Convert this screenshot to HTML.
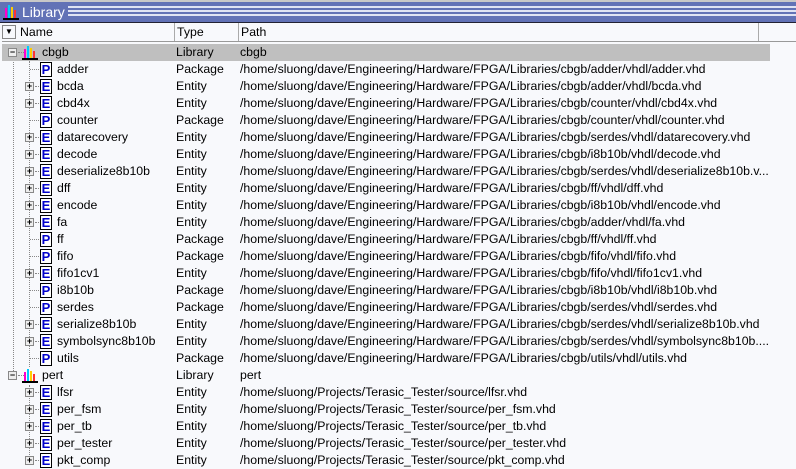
<!DOCTYPE html><html><head><style>
*{margin:0;padding:0;box-sizing:border-box}
body{width:796px;height:469px;overflow:hidden;background:#f8f9fc;font-family:"Liberation Sans",sans-serif;font-size:12.3px;color:#000;position:relative}
#tb{position:absolute;left:0;top:0;width:796px;height:23px;background:#6272b6;border-top:2px solid #c8c8c8;border-bottom:1px solid #223}
#tb .t{position:absolute;left:22px;top:2px;color:#fff;font-size:14px}
#tb .s{position:absolute;left:68px;right:0;height:2px;background:#dfe3f3}
#hd{position:absolute;left:2px;top:23px;width:794px;height:19px;border-bottom:1px solid #999;background:#f8f9fc}
#hd div{position:absolute;top:0;height:18px;line-height:18px;border-right:1px solid #aaa}
.row{position:absolute;left:2px;height:17px;width:768px;line-height:17px}
.row span{position:absolute;white-space:nowrap}
.sel{background:#bfbfbf}
.ex{position:absolute;width:9px;height:9px;border:1px solid #888;background:#eee;top:4px;font-size:9px;line-height:7px;text-align:center;font-weight:bold}
.ic{position:absolute;top:1px;width:12px;height:15px;border:1px solid #000;background:#fff;color:#00c;font-weight:bold;font-size:13px;line-height:13px;text-align:center}
.dot{position:absolute;border-top:1px dotted #888;height:0;top:8px}
.vl{position:absolute;border-left:1px dotted #888;width:0}
</style></head><body>
<div id="tb"><svg style="position:absolute;left:3px;top:2px" width="16" height="16"><rect x="0" y="14" width="16" height="2" fill="#000"/><rect x="2" y="4" width="2" height="10" fill="#f0c"/><rect x="5" y="1" width="2" height="13" fill="#0cf"/><rect x="8" y="3" width="2" height="11" fill="#fc0"/><rect x="11" y="6" width="2" height="8" fill="#f33"/></svg><span class="t">Library</span>
<div class="s" style="top:4px"></div><div class="s" style="top:8px"></div><div class="s" style="top:12px"></div></div>
<div id="hd"><div style="left:0;width:14px;border:1px solid #888;top:2px;height:14px;font-size:8px;line-height:12px;text-align:center">▼</div><div style="left:15px;width:158px;padding-left:3px">Name</div><div style="left:173px;width:64px;padding-left:2px">Type</div><div style="left:237px;width:520px;padding-left:2px">Path</div></div>
<div class="vl" style="left:29px;top:61px;height:306px"></div>
<div class="vl" style="left:29px;top:385px;height:76px"></div>
<div class="vl" style="left:13px;top:57px;height:320px"></div>
<div id="rows"></div>
<script>
var P="/home/sluong/dave/Engineering/Hardware/FPGA/Libraries/cbgb/",Q="/home/sluong/Projects/Terasic_Tester/source/";
var d=[["L","cbgb","Library","cbgb"],
["P","adder","Package",P+"adder/vhdl/adder.vhd"],["E","bcda","Entity",P+"adder/vhdl/bcda.vhd"],["E","cbd4x","Entity",P+"counter/vhdl/cbd4x.vhd"],["P","counter","Package",P+"counter/vhdl/counter.vhd"],["E","datarecovery","Entity",P+"serdes/vhdl/datarecovery.vhd"],["E","decode","Entity",P+"i8b10b/vhdl/decode.vhd"],["E","deserialize8b10b","Entity",P+"serdes/vhdl/deserialize8b10b.v..."],["E","dff","Entity",P+"ff/vhdl/dff.vhd"],["E","encode","Entity",P+"i8b10b/vhdl/encode.vhd"],["E","fa","Entity",P+"adder/vhdl/fa.vhd"],["P","ff","Package",P+"ff/vhdl/ff.vhd"],["P","fifo","Package",P+"fifo/vhdl/fifo.vhd"],["E","fifo1cv1","Entity",P+"fifo/vhdl/fifo1cv1.vhd"],["P","i8b10b","Package",P+"i8b10b/vhdl/i8b10b.vhd"],["P","serdes","Package",P+"serdes/vhdl/serdes.vhd"],["E","serialize8b10b","Entity",P+"serdes/vhdl/serialize8b10b.vhd"],["E","symbolsync8b10b","Entity",P+"serdes/vhdl/symbolsync8b10b...."],["P","utils","Package",P+"utils/vhdl/utils.vhd"],
["L","pert","Library","pert"],["E","lfsr","Entity",Q+"lfsr.vhd"],["E","per_fsm","Entity",Q+"per_fsm.vhd"],["E","per_tb","Entity",Q+"per_tb.vhd"],["E","per_tester","Entity",Q+"per_tester.vhd"],["E","pkt_comp","Entity",Q+"pkt_comp.vhd"]];
var h="";
d.forEach(function(r,i){var y=44+17*i;var s='<div class="row'+(i==0?' sel':'')+'" style="top:'+y+'px">';
if(r[0]=="L"){s+='<div class="ex" style="left:6px">−</div><div class="dot" style="left:16px;width:6px"></div><svg style="position:absolute;left:20px;top:1px" width="16" height="15"><rect x="0" y="13" width="16" height="2"/><rect x="2" y="4" width="2" height="9" fill="#f0c"/><rect x="5" y="1" width="2" height="12" fill="#0cf"/><rect x="8" y="3" width="2" height="10" fill="#fc0"/><rect x="11" y="6" width="2" height="7" fill="#f33"/></svg><span style="left:40px">'+r[1]+'</span>';}
else{if(r[0]=="E")s+='<div class="ex" style="left:23px">+</div>';s+='<div class="dot" style="left:'+(r[0]=="E"?33:28)+'px;width:'+(r[0]=="E"?4:9)+'px"></div><div class="ic" style="left:38px">'+r[0]+'</div><span style="left:55px">'+r[1]+'</span>';}
s+='<span style="left:174px">'+r[2]+'</span><span style="left:238px">'+r[3]+'</span></div>';h+=s;});
document.getElementById("rows").innerHTML=h;
</script>
</body></html>
